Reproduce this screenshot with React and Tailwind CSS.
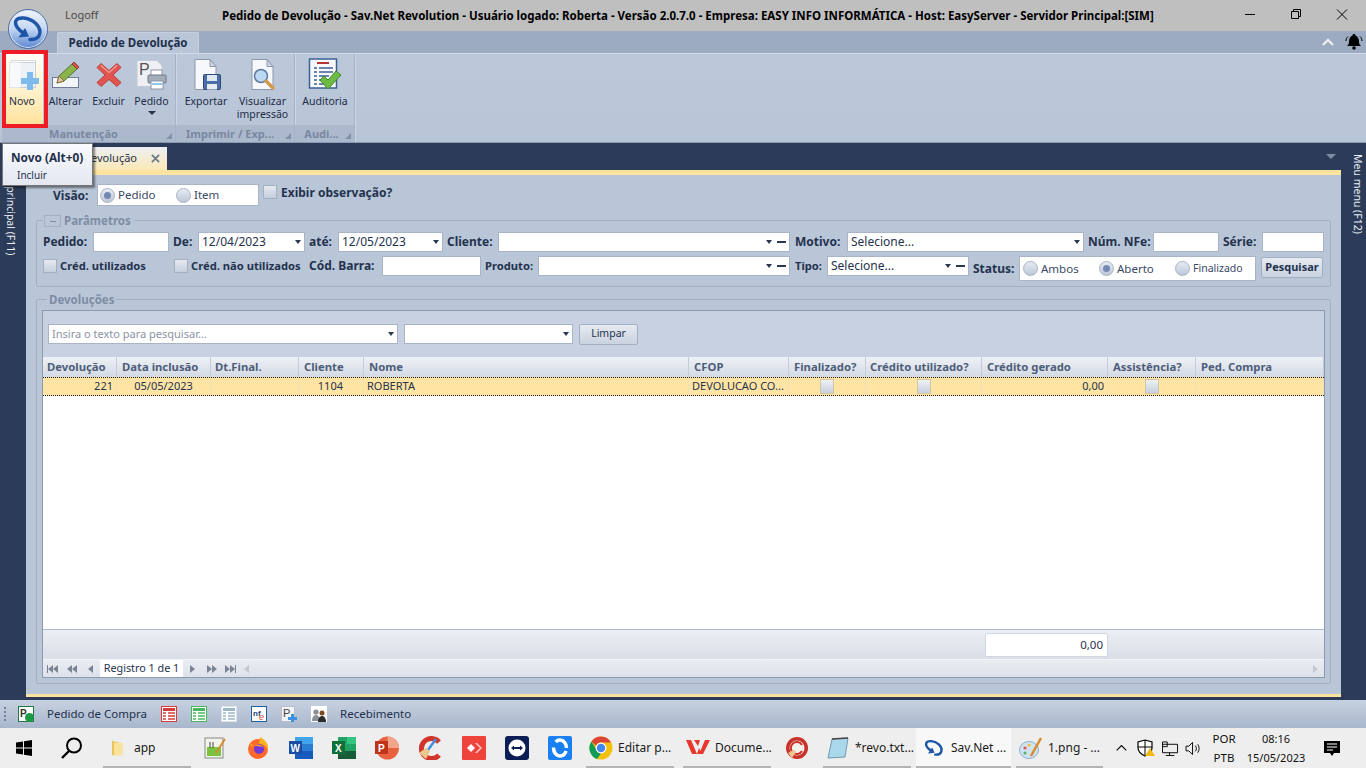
import React from "react";

const F = "font-['Noto_Sans','DejaVu_Sans',sans-serif]";

function DocIcon({ children }) {
  return (
    <svg viewBox="0 0 32 32" className="w-[32px] h-[32px]">
      <path d="M5 .5h15l6 7v23H5z" fill="#f7f8fc" stroke="#8d97ad" />
      <path d="M20 .5v7h6z" fill="#cfd6e6" stroke="#8d97ad" />
      {children}
    </svg>
  );
}

function NewIcon() {
  return (
    <svg viewBox="0 0 32 32" className="w-[32px] h-[32px]">
      <rect x="3.500" y="1.500" width="24" height="24" fill="#fbfbf8" stroke="#d5d9e0" />
      <rect x="1.500" y="3.500" width="26" height="25" fill="#eef1f6" stroke="#c8d0dc" />
      <rect x="1.500" y="3.500" width="11" height="25" fill="#f8f9fb" />
      <path d="M19 13h6v6h6v6h-6v6h-6v-6h-6v-6h6z" fill="#7fbcec" />
    </svg>
  );
}
function EditIcon() {
  return (
    <svg viewBox="0 0 30 28" className="w-[30px] h-[28px]">
      <rect x="1.500" y="16.500" width="26" height="10" fill="#f3f5f8" stroke="#6e7c97" />
      <path d="M6 22l2-7L21 3l5 5L13 20z" fill="#8ab34c" stroke="#55752a" />
      <path d="M6 22l2-7 5 5z" fill="#e5c79f" stroke="#8a6b44" />
      <path d="M21 3l2-2 5 5-2 2z" fill="#d9534f" stroke="#983330" />
    </svg>
  );
}
function DeleteIcon() {
  return (
    <svg viewBox="0 0 26 26" className="w-[26px] h-[26px]">
      <path d="M5 1.500l8 7 8-7 4 4-8 7.500 8 7.500-4 4-8-7-8 7-4-4 8-7.500-8-7.500z" fill="#e2554f" stroke="#b9413b" />
      <path d="M5 3.500l8 7 8-7" fill="none" stroke="#f3a19c" strokeWidth="1.200" />
    </svg>
  );
}
function PrintDocIcon() {
  return (
    <svg viewBox="0 0 31 31" className="w-[31px] h-[31px]">
      <path d="M1 .5h20l5 5v21H1z" fill="#eef0f4" stroke="#c3cad6" />
      <text x="3" y="15" fontSize="16" fontFamily="Liberation Sans" fill="#555">P</text>
      <rect x="15" y="10" width="11" height="6" fill="#fff" stroke="#8a94a6" />
      <rect x="12" y="15" width="18" height="8" rx="1" fill="#a3acb9" stroke="#6e7787" />
      <rect x="15" y="21" width="12" height="8" fill="#fff" stroke="#8a94a6" />
      <rect x="16" y="23" width="10" height="2" fill="#8fc7ea" />
    </svg>
  );
}
function ExportIcon() {
  return (
    <DocIcon>
      <rect x="13.500" y="15.500" width="17" height="15" rx="1" fill="#4a6fa8" stroke="#2e4a78" />
      <rect x="17" y="16" width="10" height="6" fill="#dfe7f3" />
      <rect x="17" y="25" width="10" height="5.500" fill="#e9edf4" />
    </DocIcon>
  );
}
function PreviewIcon() {
  return (
    <DocIcon>
      <circle cx="14" cy="17" r="6.500" fill="#bcd9f3" stroke="#5d7aa6" strokeWidth="1.500" />
      <path d="M19 22l7 7" stroke="#d09b4d" strokeWidth="3.500" strokeLinecap="round" />
    </DocIcon>
  );
}
function AuditIcon() {
  return (
    <svg viewBox="0 0 34 34" className="w-[34px] h-[34px]">
      <rect x="1.500" y="1" width="27" height="29" fill="#f8f9fc" stroke="#3d5f96" strokeWidth="1.500" />
      <rect x="9" y="4" width="12" height="2" fill="#b33434" />
      <path d="M6 10h3M11 10h14M6 14h3M11 14h14M6 18h3M11 18h10M6 22h3M11 22h8M6 26h3M11 26h6" stroke="#3d5f96" strokeWidth="1.400" />
      <path d="M12 22l4-4 4 4 8-9 5 4-13 14z" fill="#6dbb45" stroke="#3f8a24" />
    </svg>
  );
}

function RibbonBtn({ w, icon, lines, arrow, active }) {
  return (
    <div
      className={`flex flex-col items-center h-[70px] pt-[4px] ${w} ${
        active ? "bg-gradient-to-b from-[#fffdf5] via-[#fff2cf] to-[#ffe39c]" : ""
      }`}
    >
      <div className="h-[34px] flex items-center justify-center">{icon}</div>
      <div className={`mt-[3px] text-[10.5px] leading-[13px] text-[#1e2c47] text-center whitespace-nowrap ${active ? "pr-[4px]" : ""}`}>
        {lines.map((l) => (
          <div key={l}>{l}</div>
        ))}
      </div>
      {arrow && <div className="mt-[3px] w-0 h-0 border-x-[4px] border-x-transparent border-t-[4px] border-t-[#26334d]" />}
    </div>
  );
}

function RibbonGroup({ w, label, pr, children }) {
  return (
    <div className={`${w} h-[88px] flex flex-col border-r border-[#a5b2c7] shadow-[1px_0_0_#cdd6e3]`}>
      <div className="flex-1 flex pl-[3px]">{children}</div>
      <div className={`h-[17px] bg-[#acb9cd] relative flex items-center justify-center ${pr} text-[11px] font-bold text-[#7987a1] leading-none`}>
        <span>{label}</span>
        <span className="absolute right-[3px] bottom-[3px] w-0 h-0 border-l-[6px] border-l-transparent border-b-[6px] border-b-[#8391a8]" />
      </div>
    </div>
  );
}

function Check({ className = "" }) {
  return <span className={`inline-block w-[14px] h-[14px] shrink-0 border border-[#a5afc0] bg-gradient-to-b from-[#e6eaf1] to-[#c4cedd] ${className}`} />;
}
function Radio({ on }) {
  return (
    <span className="w-[15px] h-[15px] shrink-0 rounded-full border border-[#a9b3c4] bg-gradient-to-b from-[#e7ebf2] to-[#bcc7d8] flex items-center justify-center">
      {on && <span className="w-[7px] h-[7px] rounded-full bg-[#7489b2]" />}
    </span>
  );
}
function RadioItem({ on, label, w, size = "text-[11.5px]" }) {
  return (
    <span className={`flex items-center gap-[3px] ${size} text-[#3a4966] ${w}`}>
      <Radio on={on} />
      {label}
    </span>
  );
}
const Lbl = ({ w, children, small }) => (
  <span className={`${w} shrink-0 font-bold whitespace-nowrap text-[#24324d] ${small ? "text-[11.2px]" : "text-[12px]"}`}>{children}</span>
);
function Input({ w, children, arrow, dash, h = "h-[20px]" }) {
  return (
    <div className={`${w} ${h} shrink-0 bg-white border border-[#a9b4c6] flex items-center pl-[3px] pr-[3px] text-[12px] text-[#26334d] whitespace-nowrap`}>
      <span className="flex-1">{children}</span>
      {arrow && <span className="w-0 h-0 border-x-[3.5px] border-x-transparent border-t-[4px] border-t-[#2b3852]" />}
      {dash && <span className="ml-[5px] w-[9px] h-[2px] bg-[#2b3852]" />}
    </div>
  );
}

const cols = [
  ["Devolução", "w-[74px] px-[4px]"],
  ["Data inclusão", "w-[94px] px-[5px]"],
  ["Dt.Final.", "w-[88px] px-[4px]"],
  ["Cliente", "w-[65px] px-[5px]"],
  ["Nome", "w-[325px] px-[5px]"],
  ["CFOP", "w-[100px] px-[5px]"],
  ["Finalizado?", "w-[77px] px-[5px]"],
  ["Crédito utilizado?", "w-[116px] px-[4px]"],
  ["Crédito gerado", "w-[126px] px-[5px]"],
  ["Assistência?", "w-[88px] px-[5px]"],
  ["Ped. Compra", "flex-1 px-[5px]"],
];

function Cell({ w, align = "text-left", children }) {
  return <div className={`${w} h-full px-[3px] border-r border-[#ece1bd] flex items-center ${align === "text-right" ? "justify-end" : align === "text-center" ? "justify-center" : ""} text-[11px] text-[#26334d] whitespace-nowrap overflow-hidden`}>{children}</div>;
}
const CellCheck = () => <span className="w-[14px] h-[15px] border border-[#d3c79f] bg-gradient-to-b from-[#eef1f5] to-[#c7d0df]" />;

function NavTri({ dir, bar, double }) {
  const t = dir === "l" ? "border-r-[5px] border-r-[#7a8494]" : "border-l-[5px] border-l-[#7a8494]";
  const one = <span className={`w-0 h-0 border-y-[4px] border-y-transparent ${t}`} />;
  return (
    <span className="w-[19px] flex items-center justify-center">
      {bar && dir === "l" && <span className="w-[1px] h-[8px] bg-[#7a8494]" />}
      {one}
      {double && one}
      {bar && dir === "r" && <span className="w-[1px] h-[8px] bg-[#7a8494]" />}
    </span>
  );
}

function Mini({ children }) {
  return <svg viewBox="0 0 16 16" className="w-[16px] h-[16px] shrink-0">{children}</svg>;
}
const ListLines = ({ c, b }) => (
  <Mini>
    <rect x=".5" y=".5" width="15" height="15" fill="#fff" stroke={b} />
    <rect x="2" y="2" width="12" height="3" fill={c} />
    <path d="M2 7h3M7 7h7M2 10h3M7 10h7M2 13h3M7 13h7" stroke={c} strokeWidth="1.400" />
  </Mini>
);

const T = ({ children, className = "w-[24px] h-[24px]" }) => <svg viewBox="0 0 24 24" className={`${className} shrink-0`}>{children}</svg>;

function Swoosh({ stroke = "#1d55a8", w = 3.6 }) {
  return (
    <>
      <path d="M22 31C33 32 36 22 28 14 20 7 9 7 7 12c-1 4 3 9 8 12" fill="none" stroke={stroke} strokeWidth={w} strokeLinecap="round" />
      <path d="M10 29l11-1-4-9z" fill={stroke} />
    </>
  );
}

function TaskBtn({ icon, label, w, active, ml = "" }) {
  return (
    <div className={`${w} ${ml} h-full relative flex items-center gap-[5px] pl-[3px] shrink-0 ${active ? "bg-[#f8f8f8]" : ""}`}>
      {icon}
      <span className="text-[12px] text-[#1a1a1a] font-['Noto_Sans',sans-serif] whitespace-nowrap">{label}</span>
      <span className="absolute left-0 right-0 bottom-0 h-[2px] bg-[#b4b4b4]" />
    </div>
  );
}

const Slot = ({ w, children }) => <div className={`${w} h-full flex items-center justify-center shrink-0`}>{children}</div>;

export default function App() {
  return (
    <div className={`relative w-[1366px] h-[768px] overflow-hidden flex flex-col ${F}`}>
      {/* title bar */}
      <div className="h-[31px] bg-[#bfbfbf] flex items-center shrink-0 relative">
        <span className="ml-[65px] w-[157px] text-[11px] text-[#4a4a4a] pb-[1px]">Logoff</span>
        <span className="text-[11.5px] font-bold text-black whitespace-nowrap">
          Pedido de Devolução - Sav.Net Revolution - Usuário logado: Roberta - Versão 2.0.7.0 - Empresa: EASY INFO INFORMÁTICA - Host: EasyServer - Servidor Principal:[SIM]
        </span>
        <div className="ml-auto mr-[1px] flex items-center h-full text-black">
          <svg viewBox="0 0 46 31" className="w-[46px] h-[31px]"><path d="M18 14.500h10" stroke="#000" /></svg>
          <svg viewBox="0 0 46 31" className="w-[46px] h-[31px]"><path d="M18.500 11.500h7v7h-7zM20.500 11.500v-2h7v7h-2" fill="none" stroke="#000" /></svg>
          <svg viewBox="0 0 46 31" className="w-[46px] h-[31px]"><path d="M18 9.500l10 10M28 9.500l-10 10" stroke="#000" /></svg>
        </div>
      </div>

      {/* tab row */}
      <div className="h-[22px] bg-[#9cabc2] shrink-0 flex items-end pl-[57px] relative">
        <div className="w-[142px] h-[21px] bg-[#b9c6d8] border border-b-0 border-[#c4cfdf] rounded-t-[2px] flex items-center justify-center text-[11.5px] font-bold text-[#22304b]">
          Pedido de Devolução
        </div>
        <div className="ml-auto mr-[3px] flex items-center gap-[10px] h-full">
          <svg viewBox="0 0 14 10" className="w-[14px] h-[10px]"><path d="M2 8l5-5 5 5" fill="none" stroke="#e9edf3" strokeWidth="2.400" /></svg>
          <svg viewBox="0 0 18 18" className="w-[18px] h-[18px]">
            <path d="M9 1c1 0 1.500.7 1.500 1.500C13 3.500 14 6 14 9c0 2 1 3 2 4H2c1-1 2-2 2-4 0-3 1-5.500 3.500-6.500C7.500 1.700 8 1 9 1z" fill="#000" />
            <circle cx="9" cy="15" r="1.800" fill="#000" />
            <path d="M3 3.500C1.500 5 1 6.500 1 8M15 3.500c1.500 1.500 2 3 2 4.500" fill="none" stroke="#000" />
          </svg>
        </div>
      </div>

      {/* ribbon */}
      <div className="h-[89px] bg-gradient-to-b from-[#bbc8da] to-[#b8c5d7] border-t border-[#d2dbe7] shrink-0 flex pl-[2px]">
        <RibbonGroup w="w-[174px]" pr="pr-[10px]" label="Manutenção">
          <RibbonBtn w="w-[38px]" active icon={<NewIcon />} lines={["Novo"]} />
          <RibbonBtn w="w-[45px]" icon={<EditIcon />} lines={["Alterar"]} />
          <RibbonBtn w="w-[41px]" icon={<DeleteIcon />} lines={["Excluir"]} />
          <RibbonBtn w="w-[45px]" icon={<PrintDocIcon />} lines={["Pedido"]} arrow />
        </RibbonGroup>
        <RibbonGroup w="w-[119px]" pr="pr-[10px]" label="Imprimir / Exp...">
          <RibbonBtn w="w-[54px]" icon={<ExportIcon />} lines={["Exportar"]} />
          <RibbonBtn w="w-[59px]" icon={<PreviewIcon />} lines={["Visualizar", "impressão"]} />
        </RibbonGroup>
        <RibbonGroup w="w-[60px]" pr="pr-[6px]" label="Audi...">
          <RibbonBtn w="w-[54px]" icon={<AuditIcon />} lines={["Auditoria"]} />
        </RibbonGroup>
      </div>

      {/* main */}
      <div className="h-[558px] bg-[#2c3b57] border-t border-[#8a99b0] shrink-0 flex">
        <div className="w-[26px] shrink-0 flex justify-center pt-[12px] pr-[4px]">
          <span className="[writing-mode:vertical-rl] text-[10.5px] text-[#e8edf5] whitespace-nowrap leading-none">Menu principal (F11)</span>
        </div>
        <div className="w-[1315px] shrink-0 flex flex-col">
          <div className="h-[27px] shrink-0 flex items-end relative">
            <div className="w-[141px] h-[23px] bg-gradient-to-b from-[#eceff2] to-[#fbe8b6] flex items-center justify-end pr-[7px] text-[11px] text-[#26334d] gap-[14px]">
              <span>Pedido de Devolução</span>
              <svg viewBox="0 0 10 10" className="w-[9px] h-[9px]"><path d="M1 1l8 8M9 1l-8 8" stroke="#6f7a8c" strokeWidth="2" /></svg>
            </div>
            <span className="absolute right-[5px] top-[11px] w-0 h-0 border-x-[5px] border-x-transparent border-t-[5px] border-t-[#7f8ca5]" />
          </div>
          <div className="h-[5px] bg-[#fde3a0] shrink-0" />

          <div className="flex-1 bg-[#b9c6d8] flex flex-col px-[10px]">
            {/* visão */}
            <div className="h-[42px] pt-[9px] flex items-start shrink-0 pl-[17px]">
              <span className="w-[44px] font-bold text-[12px] text-[#24324d] pt-[3px]">Visão:</span>
              <div className="w-[162px] h-[22px] bg-white border border-[#a9b4c6] flex items-center pl-[2px]">
                <RadioItem on label="Pedido" w="w-[76px]" />
                <RadioItem label="Item" />
              </div>
              <Check className="ml-[4px] mt-[1px]" />
              <span className="ml-[4px] text-[12px] font-bold text-[#24324d]">Exibir observação?</span>
            </div>

            {/* parametros */}
            <div className="relative mt-[3px] h-[67px] border border-[#a3b0c4] rounded-[2px] shrink-0 flex flex-col px-[6px] pt-[11px] gap-[4px]">
              <div className="absolute left-[6px] top-[-7px] bg-[#b9c6d8] px-[1px] flex items-center gap-[3px] h-[14px]">
                <span className="w-[17px] h-[12px] border border-[#a3b0c4] flex items-center justify-center"><span className="w-[6px] h-[1px] bg-[#7f8ca5]" /></span>
                <span className="text-[11.5px] font-bold text-[#7e8ca5] pr-[2px]">Parâmetros</span>
              </div>
              <div className="flex items-center h-[20px]">
                <Lbl w="w-[50px]">Pedido:</Lbl>
                <Input w="w-[76px]" />
                <Lbl w="w-[25px] ml-[4px]">De:</Lbl>
                <Input w="w-[107px]" arrow>12/04/2023</Input>
                <Lbl w="w-[29px] ml-[4px]">até:</Lbl>
                <Input w="w-[105px]" arrow>12/05/2023</Input>
                <Lbl w="w-[51px] ml-[4px]">Cliente:</Lbl>
                <Input w="w-[292px]" arrow dash />
                <Lbl w="w-[52px] ml-[5px]">Motivo:</Lbl>
                <Input w="w-[237px]" arrow>Selecione...</Input>
                <Lbl w="w-[65px] ml-[4px]">Núm. NFe:</Lbl>
                <Input w="w-[66px]" />
                <Lbl w="w-[39px] ml-[4px]">Série:</Lbl>
                <Input w="w-[62px]" />
              </div>
              <div className="flex items-center h-[20px]">
                <Check />
                <Lbl w="w-[114px] ml-[3px]" small>Créd. utilizados</Lbl>
                <Check />
                <Lbl w="w-[118px] ml-[3px]" small>Créd. não utilizados</Lbl>
                <Lbl w="w-[73px]">Cód. Barra:</Lbl>
                <Input w="w-[99px]" />
                <Lbl w="w-[53px] ml-[4px]" small>Produto:</Lbl>
                <Input w="w-[252px]" arrow dash />
                <Lbl w="w-[32px] ml-[5px]" small>Tipo:</Lbl>
                <Input w="w-[142px]" arrow dash>Selecione...</Input>
                <span className="mt-[6px]"><Lbl w="w-[46px] ml-[4px] block">Status:</Lbl></span>
                <div className="w-[237px] h-[25px] shrink-0 bg-white border border-[#a9b4c6] flex items-center pl-[3px] mt-[5px]">
                  <RadioItem label="Ambos" w="w-[76px]" />
                  <RadioItem on label="Aberto" w="w-[76px]" />
                  <RadioItem label="Finalizado" size="text-[10.5px]" />
                </div>
                <div className="ml-[5px] mt-[2px] w-[62px] h-[21px] shrink-0 rounded-[2px] border border-[#a3afc2] bg-gradient-to-b from-[#e6eaf1] to-[#c9d2e0] flex items-center justify-center text-[11px] font-bold text-[#24324d]">Pesquisar</div>
              </div>
            </div>

            {/* devoluções */}
            <div className="relative mt-[12px] h-[385px] border border-[#a3b0c4] rounded-[2px] shrink-0 px-[5px] pt-[10px] pb-[5px] flex">
              <div className="absolute left-[10px] top-[-8px] bg-[#b9c6d8] px-[2px] text-[11.5px] font-bold text-[#7e8ca5] leading-[15px]">Devoluções</div>
              <div className="w-[1283px] border border-[#8d99ad] flex flex-col bg-white">
                <div className="h-[46px] bg-[#c7d1e2] flex items-center shrink-0 pl-[5px]">
                  <div className="w-[350px] h-[20px] bg-white border border-[#a9b4c6] flex items-center px-[3px] text-[11px] text-[#8a93a5]">
                    <span className="flex-1">Insira o texto para pesquisar…</span>
                    <span className="w-0 h-0 border-x-[3.5px] border-x-transparent border-t-[4px] border-t-[#2b3852]" />
                  </div>
                  <div className="ml-[6px] w-[169px] h-[20px] bg-white border border-[#a9b4c6] flex items-center justify-end px-[3px]">
                    <span className="w-0 h-0 border-x-[3.5px] border-x-transparent border-t-[4px] border-t-[#2b3852]" />
                  </div>
                  <div className="ml-[6px] w-[59px] h-[21px] rounded-[2px] border border-[#a3afc2] bg-gradient-to-b from-[#e6eaf1] to-[#c9d2e0] flex items-center justify-center text-[10.5px] text-[#26334d]">Limpar</div>
                </div>
                <div className="h-[20px] flex shrink-0 bg-gradient-to-b from-[#eef1f5] to-[#d3dae5]">
                  {cols.map(([n, w]) => (
                    <div key={n} className={`${w} h-full border-r border-[#c3ccd9] flex items-center text-[11.3px] font-bold text-[#4d5d79] whitespace-nowrap overflow-hidden`}>{n}</div>
                  ))}
                </div>
                <div className="h-[19px] flex shrink-0 bg-[#ffe4a3] border-y border-dotted border-[#1c1c1c]">
                  <Cell w="w-[74px]" align="text-right">221</Cell>
                  <Cell w="w-[94px]" align="text-center">05/05/2023</Cell>
                  <Cell w="w-[88px]" />
                  <Cell w="w-[65px]" align="text-right"><span className="pr-[17px]">1104</span></Cell>
                  <Cell w="w-[325px]">ROBERTA</Cell>
                  <Cell w="w-[100px]">DEVOLUCAO CO...</Cell>
                  <Cell w="w-[77px]" align="text-center"><CellCheck /></Cell>
                  <Cell w="w-[116px]" align="text-center"><CellCheck /></Cell>
                  <Cell w="w-[126px]" align="text-right">0,00</Cell>
                  <Cell w="w-[88px]" align="text-center"><CellCheck /></Cell>
                  <Cell w="flex-1" />
                </div>
                <div className="flex-1 bg-white" />
                <div className="h-[30px] shrink-0 border-t border-[#b0bbcc] bg-gradient-to-b from-[#eceff3] to-[#d9dee7] flex items-center justify-end pr-[216px]">
                  <div className="w-[123px] h-[24px] bg-white border border-[#d0d6e0] rounded-[2px] flex items-center justify-end pr-[4px] text-[11.5px] text-[#26334d]">0,00</div>
                </div>
                <div className="h-[18px] shrink-0 border-t border-[#f2f4f7] bg-gradient-to-b from-[#e9ecf1] to-[#dde2ea] flex items-center">
                  <NavTri dir="l" bar double />
                  <NavTri dir="l" double />
                  <NavTri dir="l" />
                  <span className="w-[83px] h-full bg-white flex items-center justify-center text-[10.8px] text-[#26334d] whitespace-nowrap">Registro 1 de 1</span>
                  <NavTri dir="r" />
                  <NavTri dir="r" double />
                  <NavTri dir="r" bar double />
                  <span className="ml-[4px] w-0 h-0 border-y-[4px] border-y-transparent border-r-[5px] border-r-[#c3c8d0]" />
                  <span className="ml-auto mr-[6px] w-0 h-0 border-y-[4px] border-y-transparent border-l-[5px] border-l-[#c3c8d0]" />
                </div>
              </div>
            </div>
          </div>
          <div className="h-[3px] bg-[#fde3a0] shrink-0" />
          <div className="h-[3px] shrink-0" />
        </div>
        <div className="w-[25px] shrink-0 flex justify-center pt-[11px] pl-[8px]">
          <span className="[writing-mode:vertical-rl] text-[10.5px] text-[#e8edf5] whitespace-nowrap leading-none">Meu menu (F12)</span>
        </div>
      </div>

      {/* toolbar */}
      <div className="h-[27px] bg-gradient-to-b from-[#c7d1e1] to-[#aab8cd] shrink-0 flex items-center pl-[4px] text-[11.5px] text-[#22304b]">
        <span className="w-[2px] h-[14px] border-l-2 border-dotted border-[#75829a]" />
        <span className="ml-[12px]">
          <Mini>
            <rect x=".5" y=".5" width="15" height="15" fill="#fff" stroke="#1f7a3e" />
            <text x="2" y="11" fontSize="10" fontFamily="Liberation Sans" fontWeight="bold" fill="#333">P</text>
            <circle cx="11.500" cy="11.500" r="4.500" fill="#1c9a46" />
          </Mini>
        </span>
        <span className="ml-[13px] w-[114px] whitespace-nowrap">Pedido de Compra</span>
        <ListLines c="#d93a3a" b="#d93a3a" />
        <span className="ml-[14px]"><ListLines c="#49b65c" b="#49b65c" /></span>
        <span className="ml-[14px]"><ListLines c="#9fb6c9" b="#dde3ea" /></span>
        <span className="ml-[14px]">
          <Mini>
            <rect x=".5" y=".5" width="15" height="15" fill="#fff" stroke="#1f5f9e" />
            <text x="2" y="10" fontSize="8" fontFamily="Liberation Sans" fontWeight="bold" fill="#23406e">nf</text>
            <text x="8" y="14" fontSize="9" fontFamily="Liberation Sans" fontStyle="italic" fill="#d8432b">e</text>
          </Mini>
        </span>
        <span className="ml-[14px]">
          <Mini>
            <rect x=".5" y=".5" width="13" height="15" fill="#f2f3f5" stroke="#b9bec8" />
            <text x="2" y="11" fontSize="11" fontFamily="Liberation Sans" fill="#444">P</text>
            <path d="M10 8h3v3h3v3h-3v2h-3v-2H7v-3h3z" fill="#3f8fe0" />
          </Mini>
        </span>
        <span className="ml-[14px]">
          <Mini>
            <rect width="16" height="16" fill="#fff" />
            <circle cx="5" cy="6" r="2.600" fill="#8a8f98" />
            <path d="M1 15c0-4 2-6 4-6s4 2 4 6z" fill="#8a8f98" />
            <circle cx="11" cy="7" r="2.500" fill="#7a4a20" />
            <path d="M7 16c0-4 2-6 4-6s4 2 4 6z" fill="#2b2b2b" />
          </Mini>
        </span>
        <span className="ml-[13px]">Recebimento</span>
      </div>

      {/* taskbar */}
      <div className="h-[41px] bg-[#eeeeee] border-t border-[#a9b6cb] shrink-0 flex items-center relative">
        <Slot w="w-[48px]">
          <svg viewBox="0 0 16 16" className="w-[16px] h-[16px]"><path d="M0 2.500l7-1v6H0zM8 1.300L16 0v7.500H8zM0 8.500h7v6l-7-1zM8 8.500h8V16l-8-1.300z" fill="#000" /></svg>
        </Slot>
        <Slot w="w-[48px]">
          <svg viewBox="0 0 24 24" className="w-[24px] h-[24px]"><circle cx="14" cy="9.500" r="7" fill="none" stroke="#000" strokeWidth="2" /><path d="M9 15l-7 7" stroke="#000" strokeWidth="2.400" /></svg>
        </Slot>
        <TaskBtn w="w-[88px]" ml="ml-[7px]" label={<span className="ml-[3px]">app</span>} icon={
          <T className="w-[16px] h-[22px] ml-[4px]"><path d="M3 1l11 3v19H3z" fill="#e9c25c" /><path d="M6 4h13v19H6z" fill="#fbe29a" /></T>
        } />
        <div className="ml-[12px] flex items-center h-full shrink-0">
          <Slot w="w-[24px]">
            <T><rect x="2" y="2" width="18" height="20" fill="#f2f4ea" stroke="#888" /><rect x="4" y="11" width="14" height="9" fill="#7cc242" /><path d="M7 6v6M10 6v6" stroke="#444" /><path d="M13 17L22 3" stroke="#d98a2b" strokeWidth="2" /></T>
          </Slot>
          <Slot w="w-[43px] ml-[9px]">
            <T>
              <circle cx="12" cy="13" r="10" fill="#ff6a2a" />
              <path d="M14 1c4 2 9 6 8 13-2-4-5-6-9-6z" fill="#ffb21f" />
              <path d="M3 6c1 2 3 2 4 2-1 2-1 3 0 5z" fill="#ffa51f" />
              <circle cx="13" cy="13" r="5" fill="#7139d8" />
              <path d="M8 10c3-2 7-2 9 1-3-1-6-1-9-1z" fill="#ff9a2b" />
            </T>
          </Slot>
          <Slot w="w-[43px]">
            <T><rect x="6" y="1" width="18" height="22" rx="1" fill="#2b7cd3" /><rect x="6" y="1" width="18" height="7" fill="#41a5ee" /><rect x="6" y="15" width="18" height="8" fill="#185abd" /><rect x="0" y="5" width="13" height="13" fill="#1a4da3" /><text x="1.500" y="15.500" fontSize="10" fontWeight="bold" fontFamily="Liberation Sans" fill="#fff">W</text></T>
          </Slot>
          <Slot w="w-[43px]">
            <T><rect x="6" y="1" width="18" height="22" rx="1" fill="#21a366" /><rect x="15" y="1" width="9" height="7" fill="#33c481" /><rect x="6" y="15" width="18" height="8" fill="#185c37" /><rect x="0" y="5" width="13" height="13" fill="#0f7038" /><text x="3" y="15.500" fontSize="10" fontWeight="bold" fontFamily="Liberation Sans" fill="#fff">X</text></T>
          </Slot>
          <Slot w="w-[43px]">
            <T><circle cx="12.500" cy="12" r="11.500" fill="#e8623f" /><path d="M12.500 12V.5A11.500 11.500 0 0 1 24 12z" fill="#f3a58c" /><rect x="0" y="5" width="13" height="13" fill="#bf3418" /><text x="3" y="15.500" fontSize="10" fontWeight="bold" fontFamily="Liberation Sans" fill="#fff">P</text></T>
          </Slot>
          <Slot w="w-[44px]">
            <T><path d="M21 6A10 10 0 1 0 21 19" fill="none" stroke="#d2352b" strokeWidth="5" /><path d="M18 3L10 14" stroke="#3f8fdc" strokeWidth="2.500" /><path d="M1 17l7-5 4 3-4 8z" fill="#ecc88f" /></T>
          </Slot>
          <Slot w="w-[43px]">
            <T><rect width="24" height="24" rx="1" fill="#ef443b" /><path d="M5 12l4-4 4 4-4 4z" fill="#fff" /><path d="M13 7l5 5-5 5 2 0 5-5-5-5z" fill="#fbd0cb" /></T>
          </Slot>
          <Slot w="w-[43px]">
            <T><rect width="24" height="24" rx="3" fill="#0b1d52" /><circle cx="12" cy="12" r="8.500" fill="#fff" /><path d="M6 12l3-2.500v1.500h6V9.500l3 2.500-3 2.500V13H9v1.500z" fill="#0b1d52" /></T>
          </Slot>
          <Slot w="w-[43px]">
            <T><rect width="24" height="24" rx="2" fill="#1a80f2" /><ellipse cx="12" cy="12" rx="6.500" ry="8" fill="none" stroke="#fff" strokeWidth="3.500" strokeDasharray="20 6" strokeDashoffset="-3" /></T>
          </Slot>
        </div>
        <div className="ml-[5px] flex items-center h-full shrink-0">
          <TaskBtn w="w-[88px]" label="Editar p..." icon={
            <T><circle cx="12" cy="12" r="11.500" fill="#f4c20d" /><path d="M12 .5A11.500 11.500 0 0 1 22 6.500H12a5.500 5.500 0 0 0-5 3L2.500 5.500A11.500 11.500 0 0 1 12 .5z" fill="#db4437" /><path d="M2.500 5.500L7 13a5.500 5.500 0 0 0 5 4.500L8 23A11.500 11.500 0 0 1 2.500 5.500z" fill="#0f9d58" /><circle cx="12" cy="12" r="4.800" fill="#4285f4" stroke="#fff" strokeWidth="1.200" /></T>
          } />
          <TaskBtn w="w-[88px]" ml="ml-[9px]" label="Docume..." icon={
            <T><path d="M0 4h5l6 14h-5zM8 4h6l-2 6zM13 18l6-14h5l-7 14z" fill="#e8372b" /><path d="M11 18l2-6 3 6z" fill="#e8372b" /></T>
          } />
          <Slot w="w-[52px]">
            <T><circle cx="12" cy="12" r="11" fill="#c9322a" /><circle cx="12" cy="12" r="7.500" fill="#f5f0ea" /><path d="M17 9a6 6 0 1 0 0 6" fill="none" stroke="#c9322a" strokeWidth="2" /><path d="M3 17l6-3 2 2-4 6z" fill="#ecc88f" /></T>
          </Slot>
          <TaskBtn w="w-[88px]" label="*revo.txt..." icon={
            <T><path d="M6 3l16-1-3 19-17 1z" fill="#a9d8ea" stroke="#6f9bb0" /><path d="M6 3l16-1" stroke="#444" strokeWidth="1.500" /></T>
          } />
          <TaskBtn w="w-[95px]" ml="ml-[5px]" active label="Sav.Net ..." icon={
            <svg viewBox="0 0 40 40" className="w-[24px] h-[24px] ml-[3px] shrink-0"><Swoosh w={4} /></svg>
          } />
          <TaskBtn w="w-[87px]" ml="ml-[5px]" label="1.png - ..." icon={
            <T><ellipse cx="10" cy="14" rx="9.500" ry="8.500" fill="#cfe3f3" stroke="#8ab0cf" /><circle cx="6" cy="12" r="1.600" fill="#e2574c" /><circle cx="10" cy="9" r="1.600" fill="#f2c037" /><circle cx="6" cy="17" r="1.600" fill="#5fb35f" /><path d="M12 20L22 2" stroke="#d98a2b" strokeWidth="2.500" /></T>
          } />
        </div>
        <div className="ml-[9px] flex items-center h-full shrink-0 text-[#111]">
          <Slot w="w-[18px]"><svg viewBox="0 0 14 10" className="w-[13px] h-[8px]"><path d="M1 8l6-6 6 6" fill="none" stroke="#000" strokeWidth="1.300" /></svg></Slot>
          <Slot w="w-[31px]"><svg viewBox="0 0 18 18" className="w-[18px] h-[18px]"><path d="M8 1l7 2v6c0 4-3 6-7 8-4-2-7-4-7-8V3z" fill="#fff" stroke="#000" strokeWidth="1.200" /><path d="M8 1v16M1 8h14" stroke="#000" /><path d="M13 9l5 8H8z" fill="#f2b90f" /></svg></Slot>
          <Slot w="w-[19px]"><svg viewBox="0 0 18 16" className="w-[17px] h-[15px]"><path d="M.5 3.500h16v9H.5zM.5 1h5v5h-5zM8 12.500v3M4 15.500h9" fill="none" stroke="#000" /></svg></Slot>
          <Slot w="w-[26px]"><svg viewBox="0 0 18 16" className="w-[17px] h-[15px]"><path d="M1 5.500h3l4-4v13l-4-4H1zM11 5c1.500 2 1.500 4 0 6M13.500 3.500c2 3 2 6 0 9" fill="none" stroke="#000" /></svg></Slot>
          <div className="w-[36px] flex flex-col items-center text-[11.5px] leading-[19px]">
            <span>POR</span>
            <span>PTB</span>
          </div>
          <div className="w-[64px] ml-[2px] flex flex-col items-center text-[11px] leading-[19px]">
            <span>08:16</span>
            <span>15/05/2023</span>
          </div>
          <Slot w="w-[48px]"><svg viewBox="0 0 16 16" className="w-[16px] h-[16px]"><path d="M0 1h16v12H10l-2 3-2-3H0z" fill="#000" /><path d="M3 4h10M3 7h10M3 10h6" stroke="#fff" /></svg></Slot>
        </div>
      </div>

      {/* overlays */}
      <div className="absolute left-[8px] top-[9px] w-[40px] h-[40px] rounded-full border border-[#4f6fa5] bg-gradient-to-b from-[#f2f6fd] via-[#c3d6f2] to-[#5d88cf] shadow-[inset_0_0_0_1px_#dbe6f7] flex items-center justify-center">
        <svg viewBox="0 0 40 40" className="w-[38px] h-[38px]"><Swoosh /></svg>
      </div>
      <div className="absolute left-[2px] top-[50px] w-[46px] h-[78px] border-[4px] border-[#ee1c25]" />
      <div className="absolute left-[2px] top-[143px] w-[91px] h-[43px] bg-gradient-to-b from-[#fafbfd] to-[#e4e7f2] border border-[#767676] shadow-[2px_2px_2px_rgba(0,0,0,.45)] px-[8px] pt-[5px]">
        <div className="text-[11.8px] font-bold text-[#22304b] leading-[16px] whitespace-nowrap">Novo (Alt+0)</div>
        <div className="text-[10px] text-[#22304b] mt-[3px] pl-[6px] leading-[14px]">Incluir</div>
      </div>
    </div>
  );
}
